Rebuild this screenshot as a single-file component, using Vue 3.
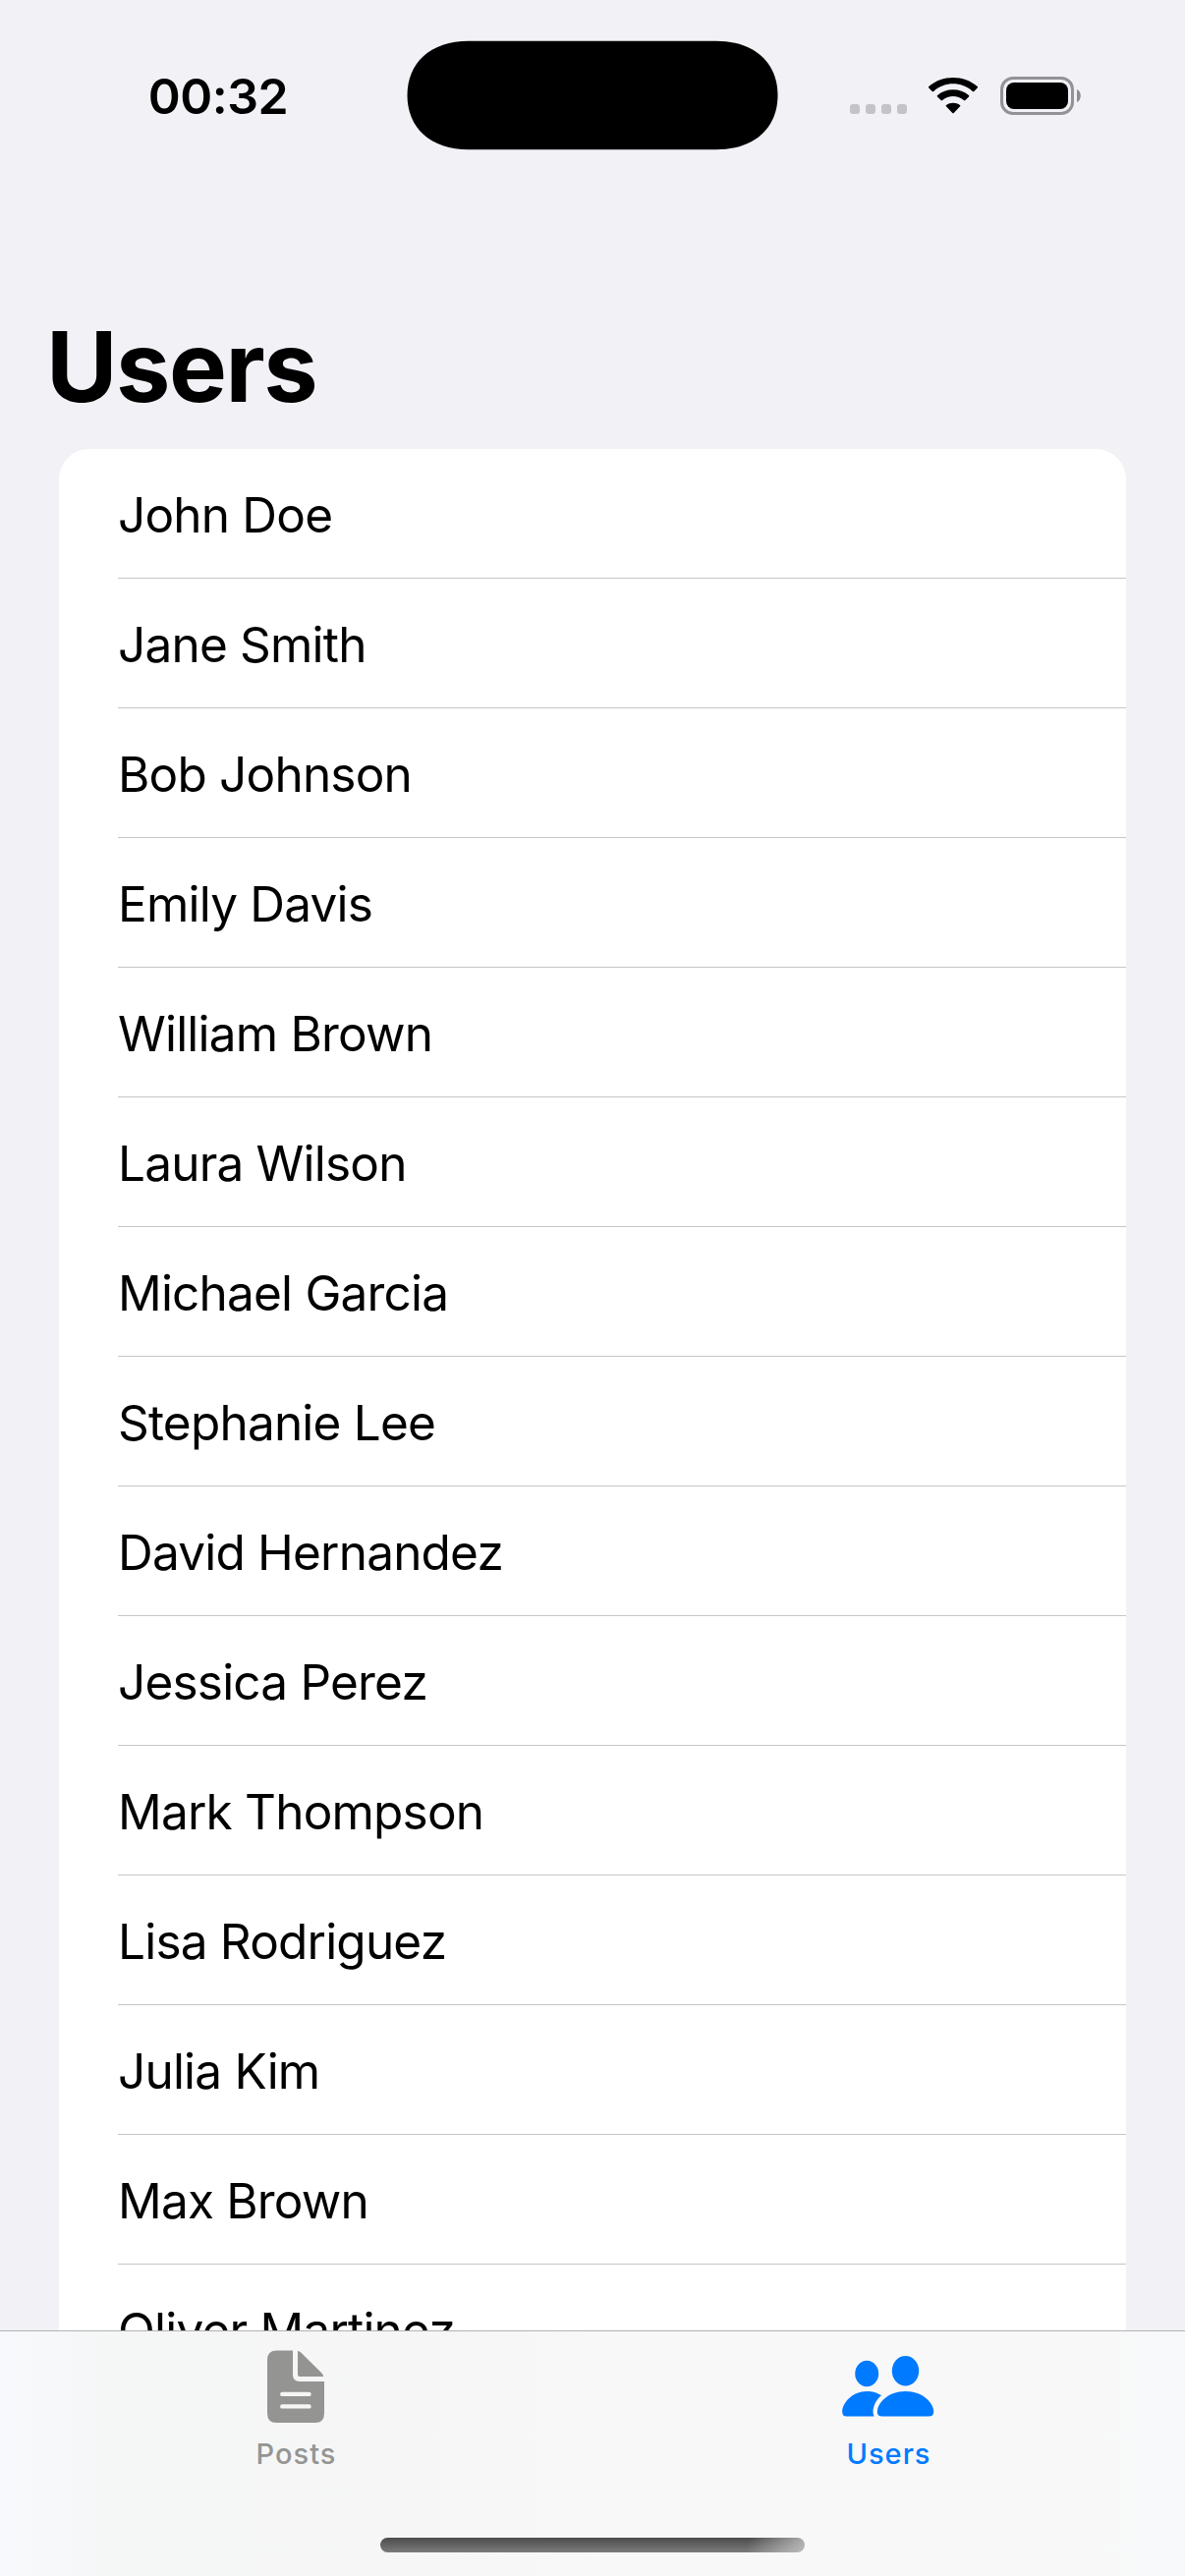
<script setup>
const users = [
  'John Doe', 'Jane Smith', 'Bob Johnson', 'Emily Davis', 'William Brown',
  'Laura Wilson', 'Michael Garcia', 'Stephanie Lee', 'David Hernandez',
  'Jessica Perez', 'Mark Thompson', 'Lisa Rodriguez', 'Julia Kim',
  'Max Brown', 'Oliver Martinez',
]
</script>

<template>
  <div class="screen">
    <header class="status">
      <time class="clock">00:32</time>
      <svg class="island" viewBox="0 0 378 112">
        <path d="M63 .7H315C354 .7 377.5 23 377.500 56S354 111.300 315 111.300H63C24 111.300 .5 89 .5 56S24 .7 63 .7Z" />
      </svg>
      <div class="indicators">
        <div class="dots"><i v-for="n in 4" :key="n" /></div>
        <svg class="wifi" viewBox="0 0 52 40" fill="#000">
          <path d="M1.300 11.500Q.6 10.800 1.300 10.100C14.500-2.200 37.500-2.200 50.700 10.100Q51.400 10.800 50.700 11.500L47.300 14.900Q46.600 15.600 45.800 14.900C34.500 4.800 17.500 4.800 6.200 14.900Q5.400 15.600 4.700 14.900Z" />
          <path d="M10 20.400Q9.300 19.700 10 19.100C18.700 11.300 33.300 11.300 42 19.100Q42.700 19.700 42 20.400L38.400 24Q37.700 24.700 36.900 24C30.500 18.700 21.500 18.700 15.100 24Q14.300 24.700 13.600 24Z" />
          <path d="M18.900 29.300Q18.200 28.600 19 28C23 25.100 29 25.100 33 28Q33.800 28.600 33.100 29.300L26.700 35.900Q26 36.600 25.300 35.900Z" transform="translate(0 1)" />
        </svg>
        <svg class="battery" viewBox="0 0 83 39">
          <rect x="1.500" y="1.500" width="72" height="36" rx="11.500" fill="none" stroke="#939397" stroke-width="3" />
          <rect x="6" y="6" width="63" height="27" rx="8" />
          <path d="M78 13C83 15 83 24 78 26Z" fill="#8d8d90" />
        </svg>
      </div>
    </header>

    <main class="content">
      <h1>Users</h1>
      <ul class="list">
        <li v-for="name in users" :key="name"><span>{{ name }}</span></li>
      </ul>
    </main>

    <footer class="bar">
      <nav class="tabs">
        <a class="tab">
          <svg viewBox="0 0 58 74" class="doc" fill="currentColor">
            <path fill-rule="evenodd" d="M9.500.5H26V25Q26 32 33 32H58V64.500Q58 74 48.500 74H9.500Q0 74 0 64.500V10Q0 .5 9.500 .5ZM15.300 42.700A2.200 2.200 0 0 0 15.300 47.100H42.500A2.200 2.200 0 0 0 42.500 42.700ZM15.300 55.200A2.200 2.200 0 0 0 15.300 59.600H42.500A2.200 2.200 0 0 0 42.500 55.200Z" />
            <path d="M31 1Q33 1.200 34.500 2.800L55.500 23.500Q57 25 57.300 27H33Q31 27 31 25Z" />
          </svg>
          <span>Posts</span>
        </a>
        <a class="tab active">
          <svg viewBox="0 0 94 74" class="people" fill="currentColor">
            <ellipse cx="25.200" cy="24" rx="12" ry="13.200" />
            <ellipse cx="64.500" cy="21.200" rx="13.700" ry="15.200" />
            <path d="M4.500 67.500Q.2 67.500 .2 63C.2 54 10 42 25.500 42C31 42 36 43.500 40 46.300C34 51 31.500 58 31.500 63Q31.500 65.500 32.500 67.500Z" />
            <path d="M41 67.500Q35.800 67.500 35.800 63C35.800 54 46.500 42 64.500 42S93.200 54 93.200 63Q93.200 67.500 88 67.500Z" />
          </svg>
          <span>Users</span>
        </a>
      </nav>
      <div class="home" />
    </footer>
  </div>
</template>

<style>
body { margin: 0; background: #f2f1f6; }
</style>

<style scoped>
.screen {
  width: 1206px;
  height: 2622px;
  display: flex;
  flex-direction: column;
  overflow: hidden;
  background: #f2f1f6;
  color: #000;
  font-family: Inter, "Liberation Sans", sans-serif;
}
.status {
  flex: none;
  height: 195px;
  display: grid;
  grid-template-columns: 414px 378px 414px;
  align-items: start;
}
.clock {
  margin-top: 67px;
  padding-left: 30px;
  line-height: 62px;
  font-size: 50px;
  font-weight: 600;
  letter-spacing: -0.5px;
  text-align: center;
}
.island { width: 378px; height: 112px; margin-top: 41px; }
.indicators { display: flex; align-items: flex-start; padding: 78px 0 0 73px; }
.dots { display: flex; gap: 6px; margin-top: 28px; }
.dots i { width: 10px; height: 10px; border-radius: 3px; background: #c4c3c8; }
.wifi { width: 52px; height: 40px; margin-left: 21px; }
.battery { width: 83px; height: 39px; margin-left: 22px; }
.content { flex: 1; min-height: 0; overflow: hidden; }
h1 {
  margin: 118px 0 24px 47px;
  line-height: 120px;
  font-size: 99px;
  font-weight: 700;
  letter-spacing: -1.500px;
}
.list {
  margin: 0 60px;
  padding: 0;
  list-style: none;
  background: #fff;
  border-radius: 31px 31px 0 0;
}
li { padding-left: 60px; height: 132px; }
li span {
  display: block;
  box-sizing: border-box;
  height: 132px;
  padding-top: 2px;
  border-bottom: 1px solid #c6c6c8;
  line-height: 131px;
  font-size: 49.500px;
  letter-spacing: -0.8px;
  white-space: nowrap;
}
.bar {
  flex: none;
  box-sizing: border-box;
  height: 250px;
  border-top: 1px solid #b2b2b3;
  background: linear-gradient(90deg, #f7f9fc 0, #f6f8f9 60px, #f5f6f6 130px, #f6f6f6 400px, #f8f8f8 600px, #f8f8f8 1080px, #f8f9fb 1206px);
  display: flex;
  flex-direction: column;
  align-items: center;
}
.tabs { width: 1206px; height: 210px; display: flex; }
.tab {
  flex: 1;
  display: flex;
  flex-direction: column;
  align-items: center;
  color: #949593;
}
.tab.active { color: #007aff; }
.tab svg { height: 74px; margin: 19px 2px 0 0; }
.doc { width: 58px; }
.people { width: 94px; }
.tab span {
  margin-top: 14px;
  line-height: 36px;
  font-size: 29px;
  font-weight: 500;
  letter-spacing: 1px;
}
.home {
  width: 432px;
  height: 15px;
  border-radius: 8px;
  background:
    linear-gradient(110deg, transparent 86%, rgba(205, 205, 205, 0.8) 100%),
    linear-gradient(#4c4c4c, #7b7b7b);
}
</style>
